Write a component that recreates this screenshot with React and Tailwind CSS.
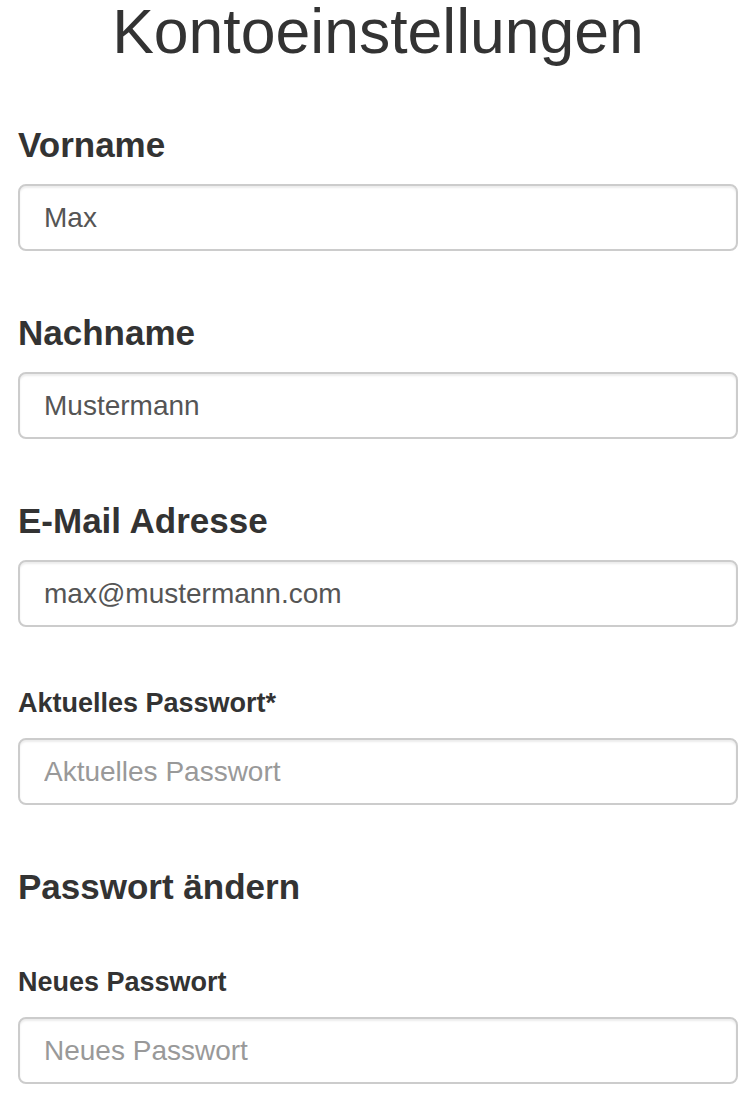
import React from "react";

const font = { fontFamily: '"Liberation Sans", Arial, Helvetica, sans-serif' };

function Field({ value, placeholder, type = "text" }) {
  return (
    <input
      type={type}
      defaultValue={value}
      placeholder={placeholder}
      className="block w-full h-[67px] rounded-[8px] border-2 border-[#cccccc] bg-white pl-[24px] pr-[23px] text-[28px] text-[#555555] placeholder:text-[#999999] shadow-[inset_0_2px_2px_rgba(0,0,0,0.075)] outline-none"
      style={font}
    />
  );
}

export default function App() {
  return (
    <div className="min-h-[1104px] bg-white text-[#333333]" style={font}>
      <div className="pl-[18px] pr-[14px]">
        <h1 className="-mt-[3px] text-center text-[62.5px] leading-[68px] font-normal">Kontoeinstellungen</h1>

        <h2 className="mt-[60px] text-[35px] leading-[40px] font-bold">Vorname</h2>
        <div className="mt-[19px]">
          <Field value="Max" />
        </div>

        <h2 className="mt-[62px] text-[35px] leading-[40px] font-bold">Nachname</h2>
        <div className="mt-[19px]">
          <Field value="Mustermann" />
        </div>

        <h2 className="mt-[62px] text-[35px] leading-[40px] font-bold">E-Mail Adresse</h2>
        <div className="mt-[19px]">
          <Field value="max@mustermann.com" />
        </div>

        <label className="block mt-[61px] text-[27px] leading-[30px] font-bold">Aktuelles Passwort*</label>
        <div className="mt-[20px]">
          <Field type="password" placeholder="Aktuelles Passwort" />
        </div>

        <h2 className="mt-[62px] text-[35px] leading-[40px] font-bold">Passwort ändern</h2>

        <label className="block mt-[60px] text-[27px] leading-[30px] font-bold">Neues Passwort</label>
        <div className="mt-[20px]">
          <Field type="password" placeholder="Neues Passwort" />
        </div>
      </div>
    </div>
  );
}
